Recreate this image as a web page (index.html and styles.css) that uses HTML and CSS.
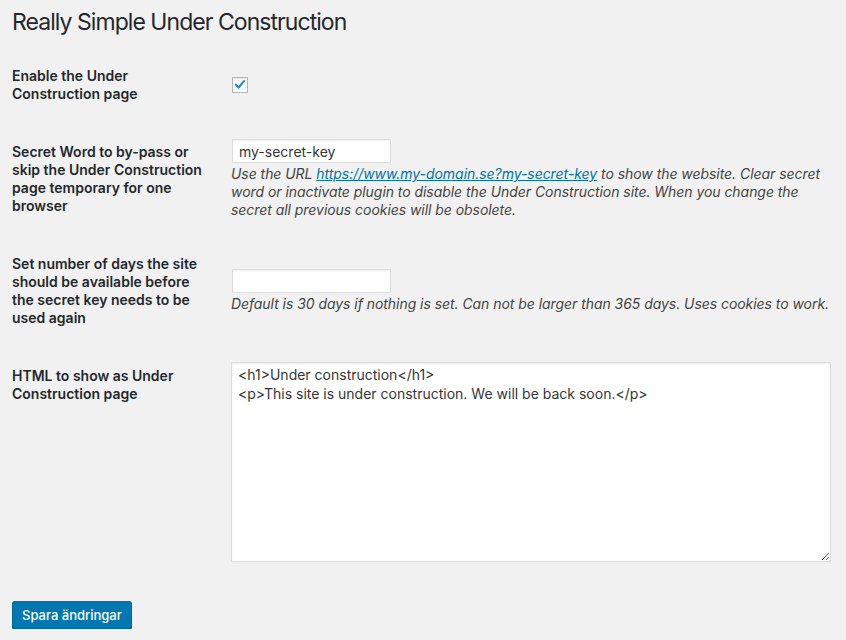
FILE: index.html
```html
<!DOCTYPE html>
<html lang="en">
<head>
<meta charset="utf-8">
<title>Really Simple Under Construction</title>
<link rel="stylesheet" href="styles.css">
</head>
<body>
<div class="wrap">
  <h1 class="page-title">Really Simple Under Construction</h1>
  <form class="settings">
    <table class="form-table">
      <tbody>
        <tr>
          <th class="label">Enable the Under Construction page</th>
          <td class="field">
            <span class="checkbox" role="checkbox" aria-checked="true">
              <svg viewBox="0 0 16 16" width="14" height="14"><path d="M3.2 7.6 L6.4 10.9 L12.6 3.6" fill="none" stroke="#1e8cbe" stroke-width="2.4" stroke-linecap="round" stroke-linejoin="round"/></svg>
            </span>
          </td>
        </tr>
        <tr>
          <th class="label">Secret Word to by-pass or skip the Under Construction page temporary for one browser</th>
          <td class="field">
            <input class="text-input" type="text" value="my-secret-key">
            <p class="description">Use the URL <a href="#">https://www.my-domain.se?my-secret-key</a> to show the website. Clear secret word or inactivate plugin to disable the Under Construction site. When you change the secret all previous cookies will be obsolete.</p>
          </td>
        </tr>
        <tr>
          <th class="label">Set number of days the site should be available before the secret key needs to be used again</th>
          <td class="field">
            <input class="text-input" type="text" value="">
            <p class="description">Default is 30 days if nothing is set. Can not be larger than 365 days. Uses cookies to work.</p>
          </td>
        </tr>
        <tr>
          <th class="label">HTML to show as Under Construction page</th>
          <td class="field">
            <textarea class="code-area">&lt;h1&gt;Under construction&lt;/h1&gt;
&lt;p&gt;This site is under construction. We will be back soon.&lt;/p&gt;</textarea>
          </td>
        </tr>
      </tbody>
    </table>
    <p class="submit"><button type="button" class="button-primary">Spara ändringar</button></p>
  </form>
</div>
</body>
</html>
```
FILE: styles.css
```css
html, body {
  margin: 0;
  padding: 0;
  background: #f1f1f1;
}
body {
  font-family: Inter, "Liberation Sans", sans-serif;
  color: #23282d;
  font-size: 13px;
}
.wrap {
  padding: 0 6px 0 12px;
}
.page-title {
  font-size: 23px;
  font-weight: 400;
  line-height: 30px;
  letter-spacing: -0.95px;
  margin: 0;
  padding: 7px 0 10px;
  color: #23282d;
}
.form-table {
  border-collapse: collapse;
  width: 100%;
}
.label {
  width: 199px;
  padding: 20px 10px 20px 0;
  vertical-align: top;
  text-align: left;
  font-size: 14px;
  font-weight: 600;
  line-height: 18px;
}
.field {
  padding: 15px 0 15px 10px;
  vertical-align: middle;
}
.checkbox {
  display: flex;
  align-items: center;
  justify-content: center;
  width: 14px;
  height: 14px;
  margin-left: 1px;
  border: 1px solid #b4b9be;
  background: #fff;
  box-shadow: inset 0 1px 2px rgba(0,0,0,.1);
}
.text-input {
  display: block;
  box-sizing: border-box;
  width: 159px;
  height: 24px;
  margin: 0 0 0 1px;
  padding: 2px 6px;
  border: 1px solid #ddd;
  box-shadow: inset 0 1px 2px rgba(0,0,0,.07);
  background: #fff;
  font-family: inherit;
  font-size: 14px;
  color: #32373c;
  outline: none;
}
.description {
  margin: 2px 0 0;
  font-size: 14px;
  font-style: italic;
  line-height: 18px;
  letter-spacing: -0.05px;
  color: #444;
}
.description a {
  color: #0073aa;
}
.code-area {
  display: block;
  box-sizing: border-box;
  width: 600px;
  height: 200px;
  margin: 0;
  padding: 2px 6px;
  border: 1px solid #ddd;
  box-shadow: inset 0 1px 2px rgba(0,0,0,.07);
  background: #fff;
  font-family: inherit;
  font-size: 14px;
  line-height: 19px;
  color: #32373c;
  outline: none;
}
.submit {
  margin: 24px 0 0;
}
.button-primary {
  height: 28px;
  padding: 0 9px 1px;
  background: #0077b0;
  border: 1px solid;
  border-color: #0073aa #006799 #006799;
  border-radius: 3px;
  box-shadow: 0 1px 0 #006799;
  color: #fff;
  font-family: inherit;
  font-size: 13px;
  font-weight: 500;
  cursor: pointer;
}
```
